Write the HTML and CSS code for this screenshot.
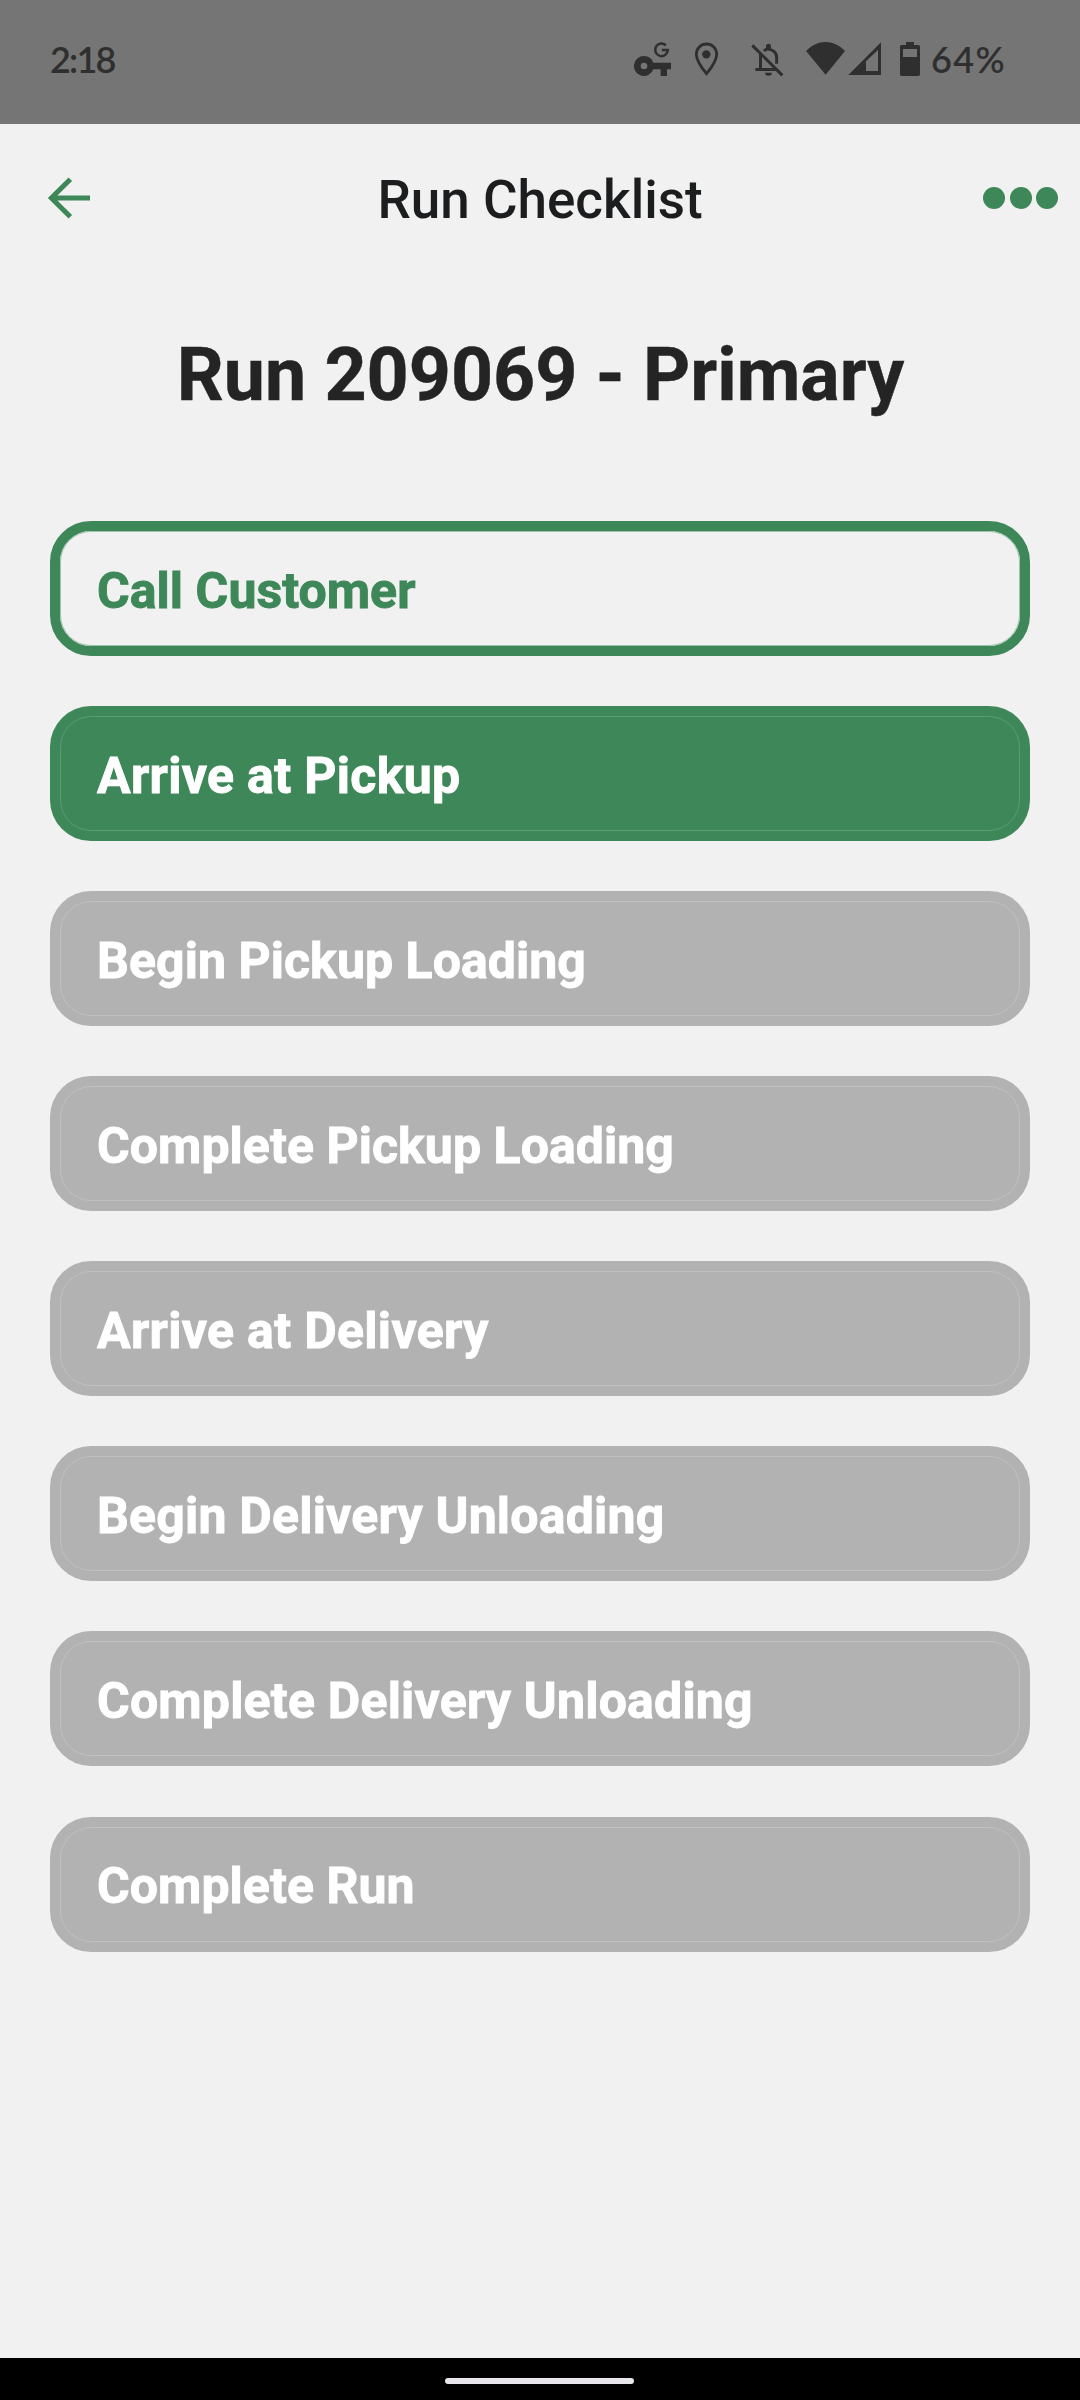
FILE: index.html
```html
<!DOCTYPE html>
<html lang="en">
<head>
<meta charset="utf-8">
<title>Run Checklist</title>
<link rel="stylesheet" href="styles.css">
</head>
<body>
<div class="screen">
  <div class="status-bar">
    <span class="clock">2:18</span>
    <div class="status-icons">
      <svg class="icon-key" viewBox="39 57 120 120">
        <path fill="currentColor" fill-rule="evenodd" d="M72 108a30 30 0 1 0 28 40h22v20h19v-20h12v-20h-53a30 30 0 0 0-28-20zm0 20a10 10 0 1 1 0 20 10 10 0 0 1 0-20z"/>
        <path fill="none" stroke="currentColor" stroke-width="7.500" d="M138 76a19 19 0 1 0 5.500 14h-18"/>
      </svg>
      <svg class="icon-pin" viewBox="219 57 81 120">
        <path fill="none" stroke="currentColor" stroke-width="8.500" d="M259.500 72C242 72 229 85 229 103c0 18 16 41 30.500 58C274 144 290 121 290 103c0-18-13-31-30.500-31z"/>
        <circle cx="259" cy="103" r="12.500" fill="currentColor"/>
      </svg>
      <svg class="icon-bell" viewBox="390 57 102 120">
        <path fill="none" stroke="currentColor" stroke-width="9" d="M397 76l90 90M406 148.500h63M421.500 103v44"/>
        <path fill="none" stroke="currentColor" stroke-width="9" d="M432 93c6-6 13-7 20-4 12 4 18 14 18 25v17"/>
        <path fill="currentColor" d="M438 86v-7a7.500 7.500 0 0 1 15 0v7zM435 158h21a10.500 9 0 0 1-21 0z"/>
      </svg>
      <svg class="icon-wifi" viewBox="555 57 123 120">
        <path fill="currentColor" d="M558 93c35-36 82-36 117 0l-58 71z"/>
      </svg>
      <svg class="icon-signal" viewBox="144 57 102 120">
        <path fill="currentColor" fill-rule="evenodd" d="M145 165l98-98v98zM198 124v29h36V90z"/>
      </svg>
      <svg class="icon-battery" viewBox="297 57 66 120">
        <path fill="currentColor" fill-rule="evenodd" d="M318 66h24v9h13q5 0 5 5v83q0 5-5 5h-50q-5 0-5-5V80q0-5 5-5h13zM309 87v24h42V87z"/>
      </svg>
      <span class="battery-level">64%</span>
    </div>
  </div>

  <header class="app-bar">
    <svg class="back" viewBox="0 0 44 44">
      <path fill="none" stroke="currentColor" stroke-width="5" d="M23.300 3.200L4.400 22l18.900 18.800M5 22h38"/>
    </svg>
    <h1 class="title">Run Checklist</h1>
    <div class="more"><i class="dot"></i><i class="dot"></i><i class="dot"></i></div>
  </header>

  <main class="content">
    <h2 class="heading">Run 209069 - Primary</h2>
    <div class="steps">
      <button class="step step-outline">Call Customer</button>
      <button class="step step-active step-wide">Arrive at Pickup</button>
      <button class="step">Begin Pickup Loading</button>
      <button class="step">Complete Pickup Loading</button>
      <button class="step step-wide">Arrive at Delivery</button>
      <button class="step step-roomy">Begin Delivery Unloading</button>
      <button class="step step-roomy">Complete Delivery Unloading</button>
      <button class="step">Complete Run</button>
    </div>
  </main>

  <div class="nav-bar"><div class="nav-handle"></div></div>
</div>
</body>
</html>
```
FILE: styles.css
```css
* { box-sizing: border-box; }

body {
  margin: 0;
  background: #f1f1f1;
  font-family: Roboto, sans-serif;
}

.screen {
  display: flex;
  flex-direction: column;
  width: 1080px;
  height: 2400px;
}

.status-bar {
  display: flex;
  justify-content: space-between;
  height: 124px;
  padding: 39px 0 0 50px;
  background: #757575;
  color: #2f2f2f;
  font: 600 36px/40px Lato, sans-serif;
}

.clock { letter-spacing: -1.800px; }

.status-icons {
  display: flex;
  width: 447px;
}

.status-icons svg {
  flex: none;
  height: 40px;
}

.icon-key { width: 40px; }
.icon-pin { width: 27px; margin-left: 20px; }
.icon-bell { width: 34px; margin-left: 30px; }
.icon-wifi { width: 41px; margin-left: 21px; }
.icon-signal { width: 34px; margin-left: 2px; }
.icon-battery { width: 22px; margin-left: 17px; }

.battery-level {
  margin-left: 10px;
  letter-spacing: 1.400px;
}

.app-bar {
  display: grid;
  grid-template-columns: 200px 1fr 200px;
  align-items: center;
  height: 147px;
  padding: 0 22px 0 47px;
  color: #3d8758;
}

.back {
  width: 44px;
  height: 44px;
}

.title {
  margin: 5px 0 0 -25px;
  color: #1c1d1f;
  font-size: 53px;
  font-weight: 500;
  line-height: 60px;
  text-align: center;
  white-space: nowrap;
}

.more {
  display: flex;
  justify-content: flex-end;
  gap: 4.500px;
}

.dot {
  width: 22px;
  height: 22px;
  border-radius: 50%;
  background: currentColor;
}

.content {
  flex: 1;
  padding: 61px 50px 0;
}

.heading {
  margin: 0 0 103px;
  padding-left: 1px;
  color: #242424;
  font-size: 73.500px;
  font-weight: 700;
  line-height: 86px;
  text-align: center;
  -webkit-text-stroke: 0.400px currentColor;
}

.steps {
  display: flex;
  flex-direction: column;
  gap: 50.080px;
}

.step {
  position: relative;
  height: 135px;
  padding: 4px 47px 0;
  border: 0;
  border-radius: 41px;
  background: #b2b2b2;
  color: #fff;
  font: 700 50px/58px Roboto, sans-serif;
  letter-spacing: 0.050px;
  text-align: left;
  -webkit-text-stroke: 0.900px currentColor;
}

.step-roomy { letter-spacing: 0.200px; }
.step-wide { letter-spacing: 0.320px; }

/* hairline seam between the border and the fill */
.step::before {
  content: "";
  position: absolute;
  inset: 10px;
  border: 1px solid #c0c0c0;
  border-radius: 31px;
}

.step-active { background: #3d8758; }
.step-active::before { border-color: #5b9c76; }

.step-outline {
  border: 10px solid #3d8758;
  padding: 4px 37px 0;
  background: transparent;
  color: #3d8758;
}

.step-outline::before {
  inset: 0;
  border-color: #9cc4ab;
}

.nav-bar {
  display: flex;
  justify-content: center;
  height: 42px;
  padding: 20px 1px 0 0;
  background: #000;
}

.nav-handle {
  width: 189px;
  height: 6px;
  border-radius: 3px;
  background: #e8e6ea;
}
```
